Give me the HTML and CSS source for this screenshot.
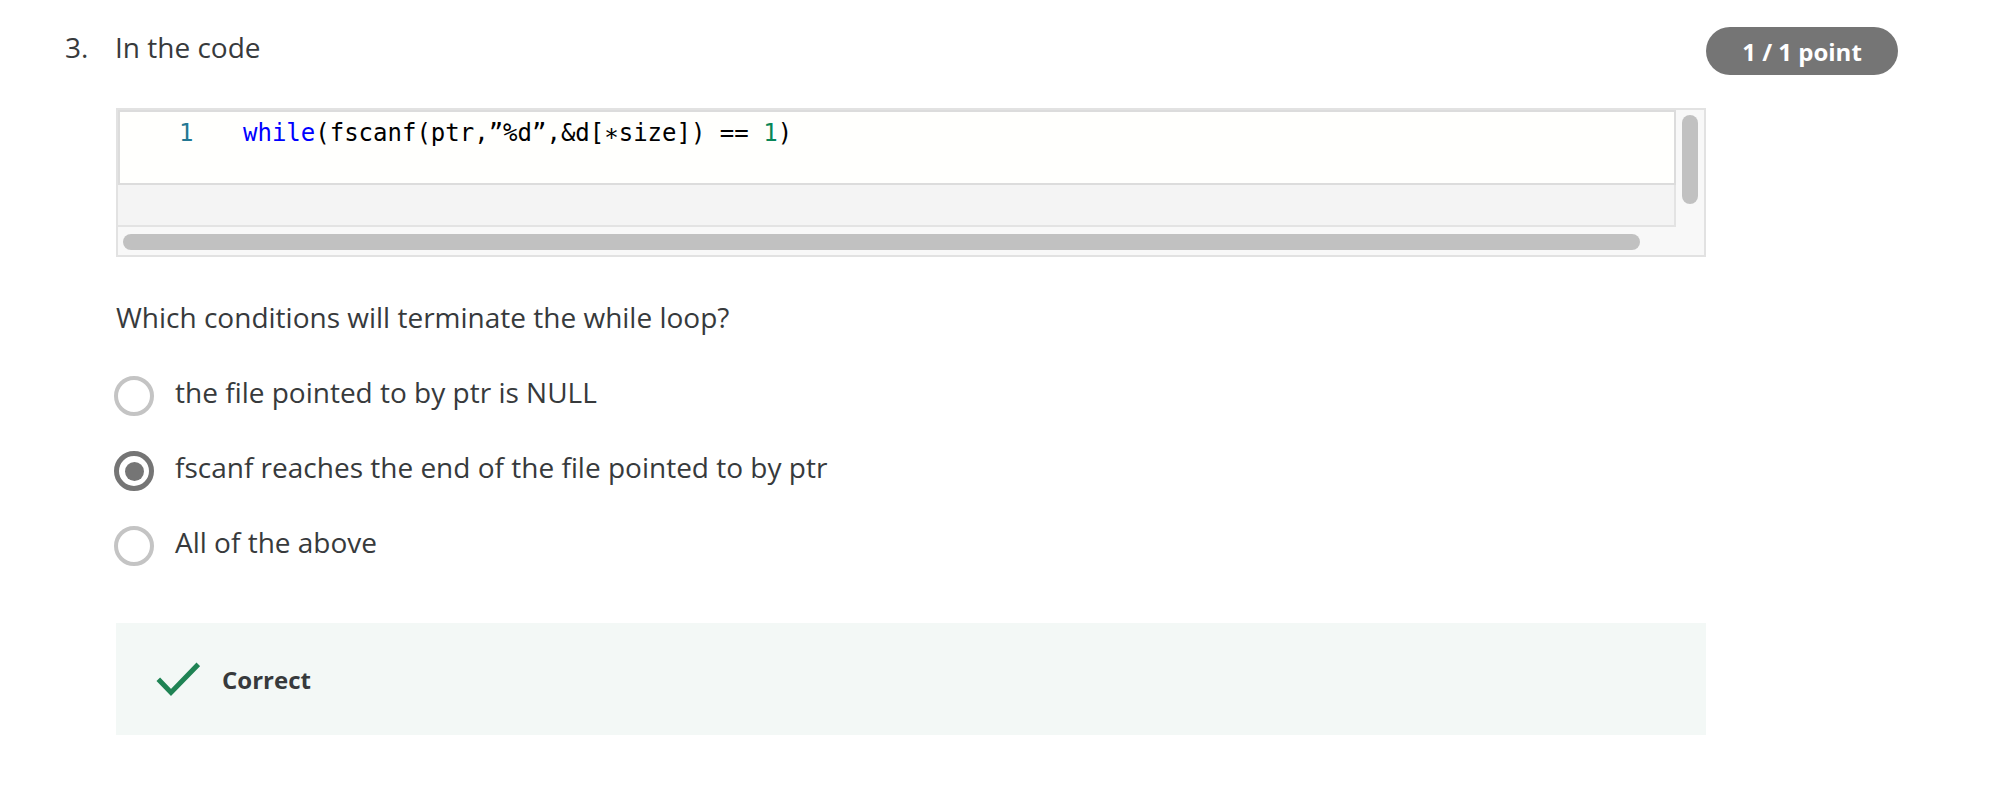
FILE: index.html
```html
<!DOCTYPE html>
<html lang="en">
<head>
<meta charset="utf-8">
<title>Question 3</title>
<link rel="stylesheet" href="styles.css">
</head>
<body>
<main class="question">
  <div class="q-header">
    <span class="q-num">3.</span>
    <h2 class="q-title">In the code</h2>
    <span class="badge">1 / 1 point</span>
  </div>
  <div class="q-body">
    <div class="code-frame">
      <div class="code-main">
        <div class="editor">
          <div class="code-line">
            <span class="gutter">1</span>
            <span class="code"><span class="kw">while</span>(fscanf(ptr,”%d”,&amp;d[∗size]) == <span class="num">1</span>)</span>
          </div>
        </div>
        <div class="editor-foot"></div>
      </div>
      <div class="vtrack"><div class="vthumb"></div></div>
      <div class="htrack"><div class="hthumb"></div></div>
      <div class="corner"></div>
    </div>

    <p class="prompt">Which conditions will terminate the while loop?</p>

    <div class="options">
      <label class="option"><span class="radio"></span><span class="opt-text">the file pointed to by ptr is NULL</span></label>
      <label class="option"><span class="radio radio-checked"><span class="dot"></span></span><span class="opt-text">fscanf reaches the end of the file pointed to by ptr</span></label>
      <label class="option"><span class="radio"></span><span class="opt-text">All of the above</span></label>
    </div>

    <div class="feedback">
      <svg class="check" width="44" height="36" viewBox="0 0 44 36" aria-hidden="true">
        <polyline points="2.3,18.3 15,31.5 42.3,3.3" fill="none" stroke="#1f8354" stroke-width="5"/>
      </svg>
      <span class="feedback-text">Correct</span>
    </div>
  </div>
</main>
</body>
</html>
```

FILE: styles.css
```css
* { box-sizing: border-box; }

html, body {
  margin: 0;
  padding: 0;
  background: #ffffff;
}

body {
  font-family: "Open Sans", "Liberation Sans", sans-serif;
  color: #373a3c;
}

.question {
  padding: 27px 98px 0 65px;
}

.q-header {
  display: flex;
  align-items: flex-start;
  height: 48px;
}

.q-num {
  width: 50px;
  font-size: 28px;
  line-height: 40px;
}

.q-title {
  margin: 0;
  font-size: 28px;
  line-height: 40px;
  font-weight: 400;
}

.badge {
  margin-left: auto;
  width: 192px;
  height: 48px;
  border-radius: 24px;
  background: #757575;
  color: #ffffff;
  font-weight: 700;
  font-size: 24px;
  display: flex;
  align-items: center;
  justify-content: center;
}

.q-body {
  margin-left: 51px;
  width: 1590px;
}

/* code editor */
.code-frame {
  margin-top: 33px;
  border: 2px solid #e2e2e2;
  background: #f8f8f8;
  display: grid;
  grid-template-columns: 1fr 28px;
  grid-template-rows: 117px 28px;
}

.code-main {
  display: flex;
  flex-direction: column;
}

.editor {
  height: 75px;
  border: 2px solid #dcdcdc;
  background: #fffffd;
  padding-top: 5px;
}

.editor-foot {
  height: 42px;
  background: #f4f4f4;
  border-right: 2px solid #e3e3e3;
  border-bottom: 2px solid #e3e3e3;
}

.code-line {
  display: flex;
  font-family: "DejaVu Sans Mono", "Liberation Mono", monospace;
  font-size: 24px;
  line-height: 33px;
  white-space: pre;
  color: #000000;
}

.gutter {
  width: 123px;
  padding-left: 59px;
  color: #237893;
}

.kw { color: #0000ff; }
.num { color: #098658; }

.vtrack {
  padding: 5px 0 0 6px;
}

.vthumb {
  width: 16px;
  height: 89px;
  border-radius: 8px;
  background: #c1c1c1;
}

.htrack {
  padding: 7px 0 0 5px;
}

.hthumb {
  width: 1517px;
  height: 16px;
  border-radius: 8px;
  background: #c1c1c1;
}

/* question text */
.prompt {
  margin: 40px 0 0;
  font-size: 28px;
  line-height: 40px;
}

.options {
  margin-top: 35px;
  display: flex;
  flex-direction: column;
  gap: 31px;
}

.option {
  display: flex;
  align-items: flex-start;
  font-size: 28px;
  line-height: 40px;
}

.radio {
  width: 40px;
  height: 40px;
  margin: 4px 21px 0 -2px;
  border: 4px solid #c4c4c4;
  border-radius: 50%;
  flex: none;
  display: flex;
  align-items: center;
  justify-content: center;
}

.radio-checked {
  border: 5px solid #757575;
}

.dot {
  width: 19px;
  height: 19px;
  border-radius: 50%;
  background: #757575;
}

/* feedback */
.feedback {
  margin-top: 57px;
  height: 112px;
  background: #f3f8f6;
  display: flex;
  align-items: center;
  padding-left: 40px;
}

.check {
  margin-right: 22px;
  flex: none;
}

.feedback-text {
  font-weight: 700;
  font-size: 24px;
  color: #373a3c;
}
```
